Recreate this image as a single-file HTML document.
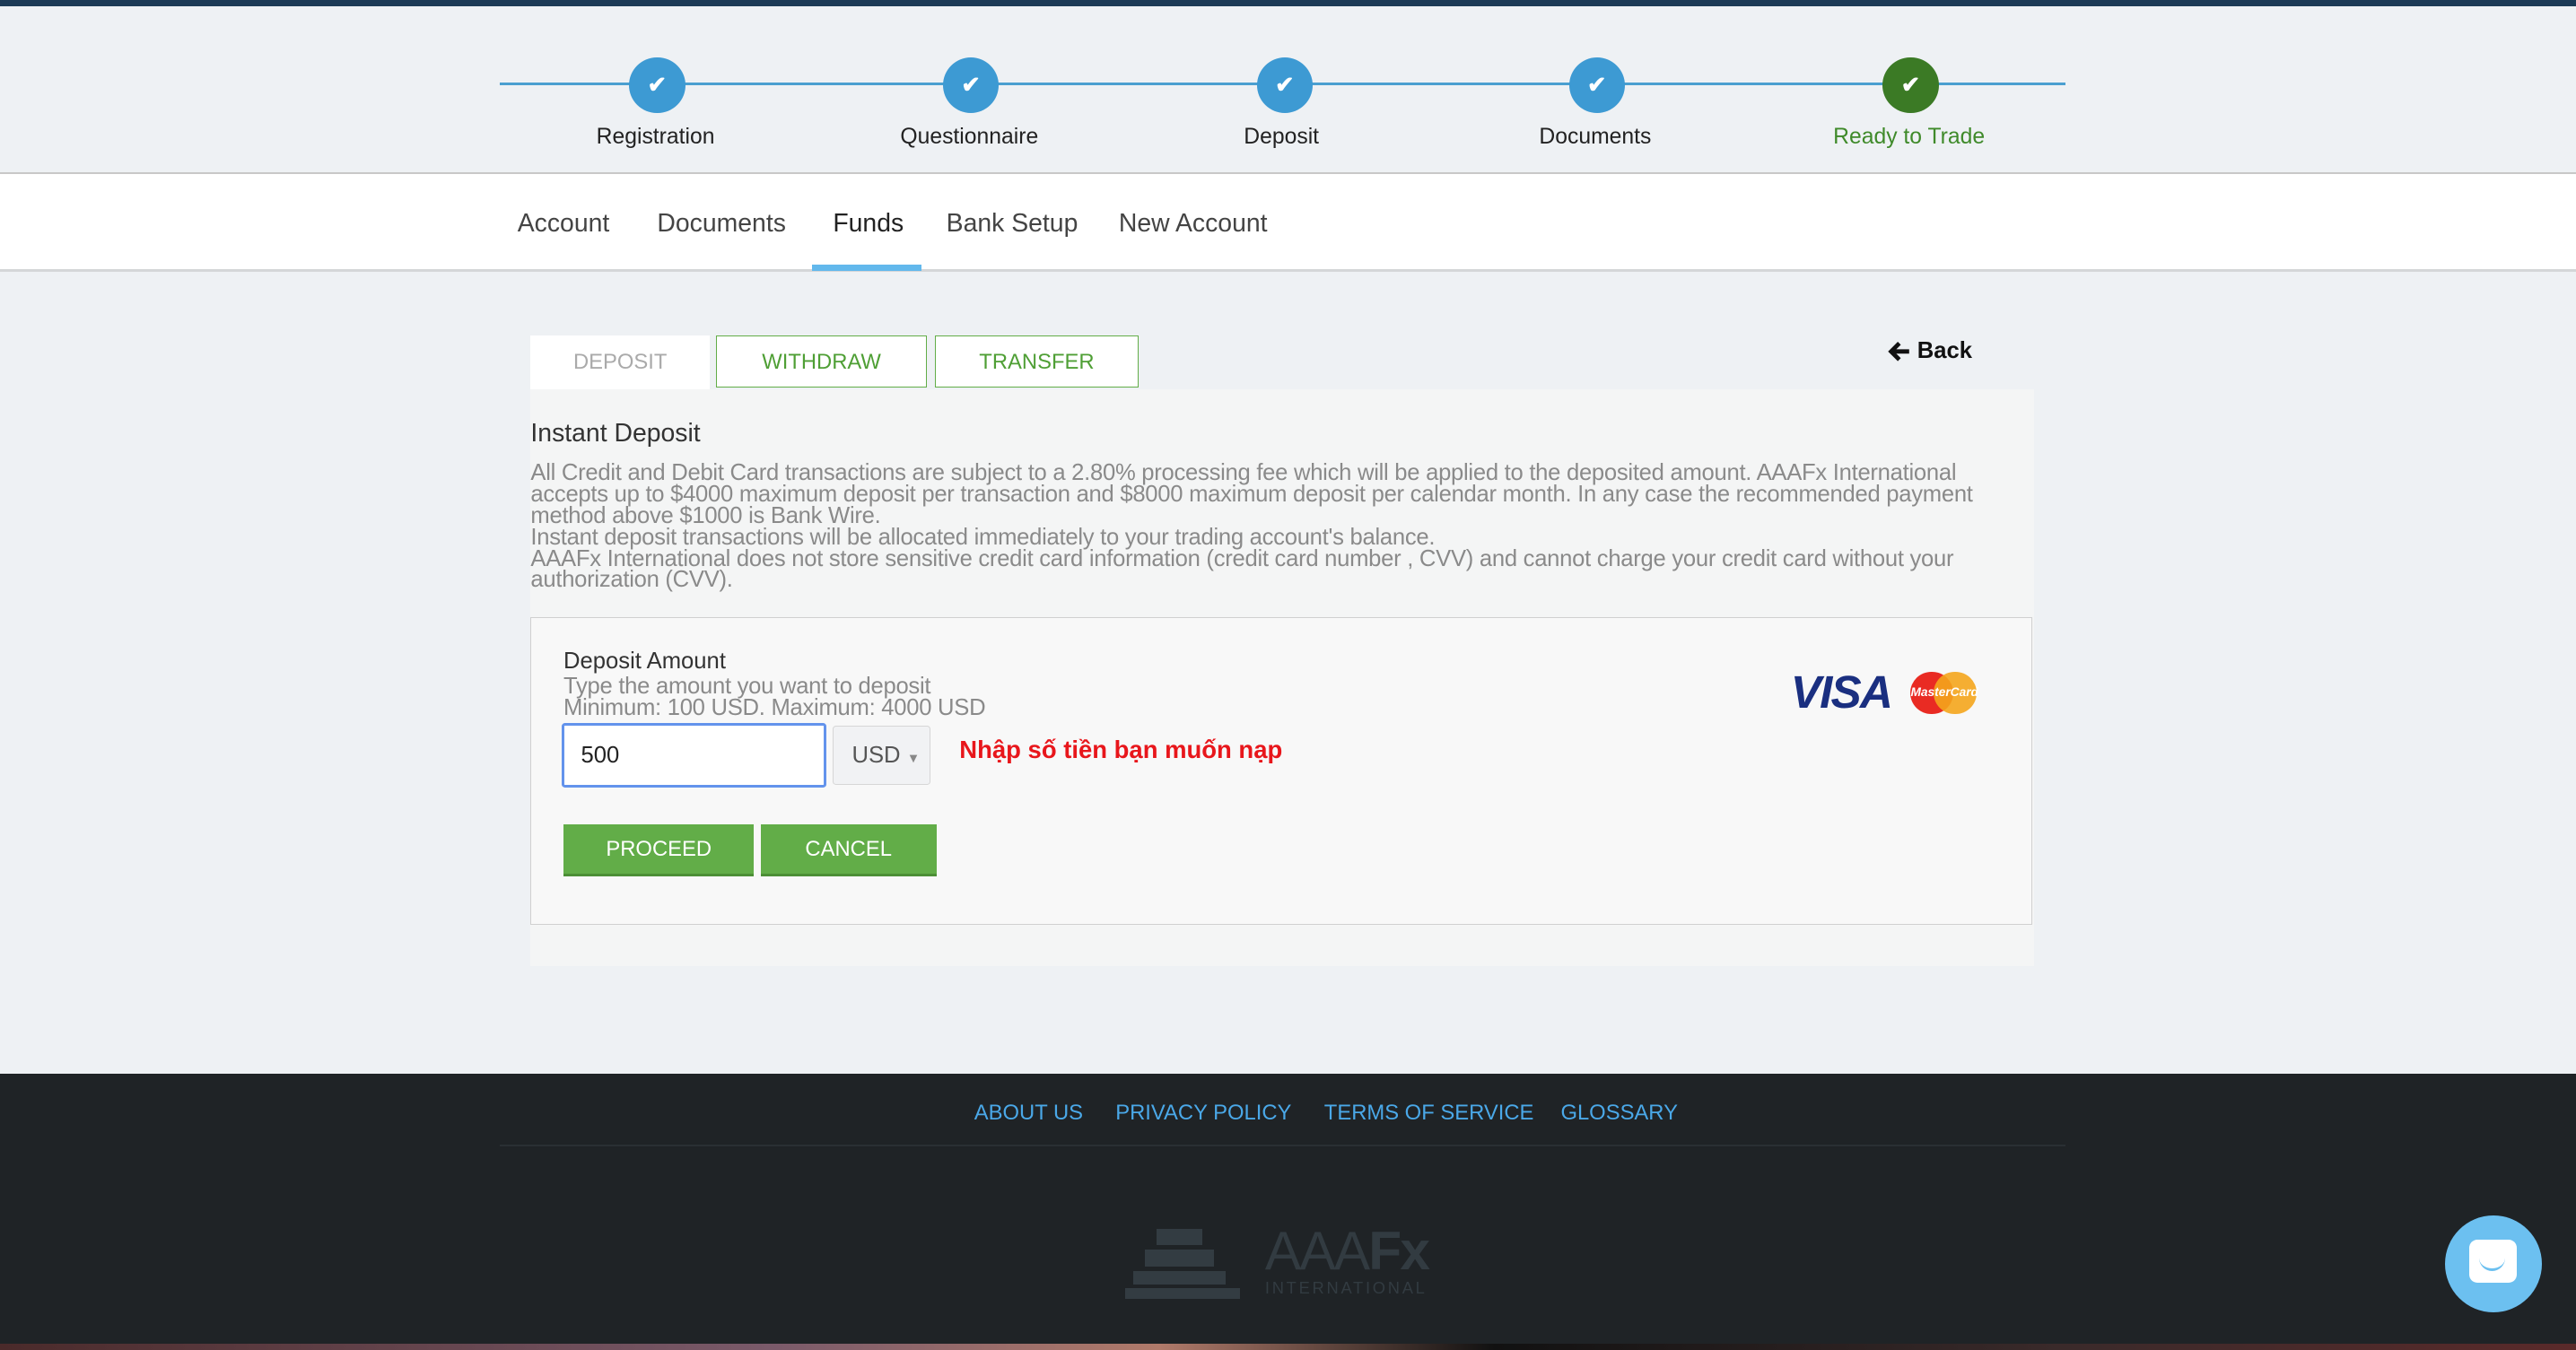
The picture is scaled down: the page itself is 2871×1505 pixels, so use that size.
<!DOCTYPE html>
<html><head><meta charset="utf-8"><style>
html,body{margin:0;padding:0;width:2871px;height:1505px;overflow:hidden;background:#eef1f4}
#r{zoom:1.831;position:relative;width:1568px;height:822px;font-family:"Liberation Sans",Arial,sans-serif;background:#eef1f4;overflow:hidden}
.a{position:absolute}
.step{position:absolute;top:35px;width:34px;height:34px;border-radius:50%;background:#3d9ad3;color:#fff;text-align:center;line-height:34px;font-size:14px;font-weight:bold}
.lbl{position:absolute;top:76px;width:180px;text-align:center;font-size:13.5px;color:#222}
.nav{position:absolute;top:127px;font-size:15.5px;color:#444}
.p{font-size:14px;color:#8a8a8a;line-height:13px;letter-spacing:-0.15px}
.btn{position:absolute;top:502px;height:30px;background:#62ad48;border-bottom:2px solid #4c8f36;color:#fff;font-size:13px;text-align:center;line-height:31px}
.fl{position:absolute;top:670px;font-size:13px;color:#4aa8e8}
</style></head><body><div id="r">
<div class="a" style="left:0;top:0;width:1568px;height:4px;background:#1c3a56"></div>
<div class="a" style="left:0;top:105px;width:1568px;height:1px;background:#c8c8c8"></div>
<div class="a" style="left:304px;top:50px;width:953px;height:2px;background:#4a9fd0"></div>
<div class="step" style="left:383px">✔</div>
<div class="step" style="left:574px">✔</div>
<div class="step" style="left:765px">✔</div>
<div class="step" style="left:955px">✔</div>
<div class="step" style="left:1146px;background:#3b7a25">✔</div>
<div class="lbl" style="left:309px">Registration</div>
<div class="lbl" style="left:500px">Questionnaire</div>
<div class="lbl" style="left:690px">Deposit</div>
<div class="lbl" style="left:881px">Documents</div>
<div class="lbl" style="left:1072px;color:#3f8a2a">Ready to Trade</div>
<div class="a" style="left:0;top:106px;width:1568px;height:58px;background:#fff;border-bottom:2px solid #d4d6d8"></div>
<div class="nav" style="left:315px">Account</div>
<div class="nav" style="left:400px">Documents</div>
<div class="nav" style="left:507px;color:#222">Funds</div>
<div class="nav" style="left:576px">Bank Setup</div>
<div class="nav" style="left:681px">New Account</div>
<div class="a" style="left:494px;top:161px;width:67px;height:4px;background:#62b8ec"></div>
<div class="a" style="left:323px;top:204px;width:109px;height:33px;background:#fff;color:#aaa;font-size:13px;text-align:center;line-height:33px">DEPOSIT</div>
<div class="a" style="left:436px;top:204px;width:127px;height:31px;border:1px solid #62ad48;background:#fff;color:#4f9f35;font-size:13px;text-align:center;line-height:32px">WITHDRAW</div>
<div class="a" style="left:569px;top:204px;width:123px;height:31px;border:1px solid #62ad48;background:#fff;color:#4f9f35;font-size:13px;text-align:center;line-height:32px">TRANSFER</div>
<svg class="a" style="left:1149px;top:207px" width="14" height="14" viewBox="0 0 14 14"><path d="M7 2 L2 7 L7 12 M2 7 H13" stroke="#111" stroke-width="2.6" fill="none"/></svg>
<div class="a" style="left:1167px;top:206px;font-size:14px;font-weight:bold;color:#111">Back</div>
<div class="a" style="left:323px;top:237px;width:915px;height:351px;background:#f4f5f5"></div>
<div class="a" style="left:323px;top:255px;font-size:15.5px;color:#333">Instant Deposit</div>
<div class="a p" style="left:323px;top:282px;width:910px;white-space:nowrap">All Credit and Debit Card transactions are subject to a 2.80% processing fee which will be applied to the deposited amount. AAAFx International<br>accepts up to $4000 maximum deposit per transaction and $8000 maximum deposit per calendar month. In any case the recommended payment<br>method above $1000 is Bank Wire.<br>Instant deposit transactions will be allocated immediately to your trading account's balance.<br>AAAFx International does not store sensitive credit card information (credit card number , CVV) and cannot charge your credit card without your<br>authorization (CVV).</div>
<div class="a" style="left:323px;top:376px;width:913px;height:186px;border:1px solid #d0d0d0;background:#f8f8f8"></div>
<div class="a" style="left:343px;top:395px;font-size:14px;color:#333">Deposit Amount</div>
<div class="a p" style="left:343px;top:412px">Type the amount you want to deposit<br>Minimum: 100 USD. Maximum: 4000 USD</div>
<div class="a" style="left:342px;top:440px;width:158px;height:36px;border:2px solid #6393ec;border-radius:2px;background:#fff;font-size:14px;line-height:37px;color:#222;text-indent:10px">500</div>
<div class="a" style="left:507px;top:442px;width:58px;height:35px;border:1px solid #d6d6d6;border-radius:2px;background:#f1f2f4;font-size:14px;line-height:35px;color:#555;text-indent:11px">USD <span style="font-size:8px;color:#888">▼</span></div>
<div class="a" style="left:584px;top:448px;font-size:15px;font-weight:bold;color:#e8161b">Nhập số tiền bạn muốn nạp</div>
<div class="btn" style="left:343px;width:116px">PROCEED</div>
<div class="btn" style="left:463px;width:107px">CANCEL</div>
<div class="a" style="left:1090px;top:405px;font-size:28px;font-weight:bold;font-style:italic;color:#1a2f80;letter-spacing:-1px">VISA</div>
<div class="a" style="left:1163px;top:409px;width:26px;height:26px;border-radius:50%;background:#e92b23"></div>
<div class="a" style="left:1177px;top:409px;width:26px;height:26px;border-radius:50%;background:#f4a51c;opacity:.9"></div>
<div class="a" style="left:1163px;top:417px;font-size:7.5px;font-style:italic;font-weight:bold;color:#fff">MasterCard</div>
<div class="a" style="left:0;top:654px;width:1568px;height:164px;background:#1f2326"></div>
<div class="a" style="left:304px;top:697px;width:953px;height:1px;background:#2a2f33"></div>
<div class="fl" style="left:593px">ABOUT US</div>
<div class="fl" style="left:679px">PRIVACY POLICY</div>
<div class="fl" style="left:806px">TERMS OF SERVICE</div>
<div class="fl" style="left:950px">GLOSSARY</div>
<div class="a" style="left:704px;top:748px;width:28px;height:10px;background:#333c42"></div>
<div class="a" style="left:697px;top:761px;width:42px;height:10px;background:#333c42"></div>
<div class="a" style="left:690px;top:774px;width:56px;height:8px;background:#333c42"></div>
<div class="a" style="left:685px;top:784px;width:70px;height:7px;background:#333c42"></div>
<div class="a" style="left:770px;top:742px;font-size:33px;color:#323b41;letter-spacing:-1px">AAA<b>Fx</b></div>
<div class="a" style="left:770px;top:778px;font-size:10px;color:#323b41;letter-spacing:1.5px">INTERNATIONAL</div>
<div class="a" style="left:1488px;top:740px;width:59px;height:59px;border-radius:50%;background:#6cc0f0"></div>
<div class="a" style="left:1503px;top:755px;width:29px;height:26px;border-radius:5px;background:#fff"></div>
<div class="a" style="left:1509px;top:764px;width:16px;height:8px;border-bottom:2px solid #6cc0f0;border-radius:0 0 8px 8px"></div>
<div class="a" style="left:0;top:818px;width:1568px;height:4px;background:linear-gradient(90deg,#4a2a2a,#7a5a6a 30%,#b07a6a 45%,#111 58%,#3a2a2a 80%,#5a2a2a)"></div>
</div></body></html>
